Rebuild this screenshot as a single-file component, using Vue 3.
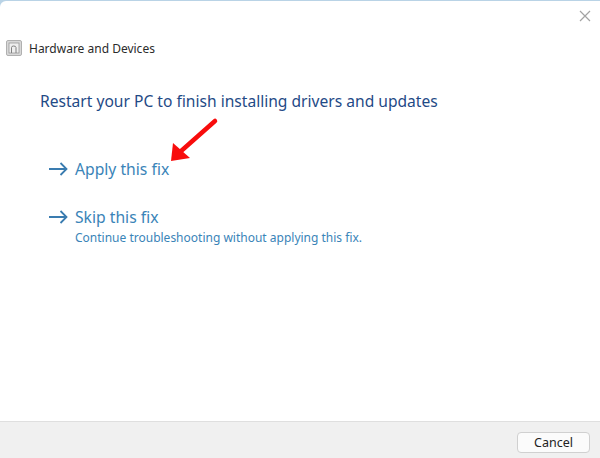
<script setup>
const title = "Restart your PC to finish installing drivers and updates"
</script>

<template>
  <div class="frame">
    <div class="window">
      <button class="close" aria-label="Close">
        <svg width="12" height="12" viewBox="0 0 12 12">
          <path d="M1 1L11 11M11 1L1 11" stroke="#a3a3a3" stroke-width="1.2" fill="none" />
        </svg>
      </button>
      <div class="content">
        <div class="head">
          <svg class="app-icon" width="16" height="16" viewBox="0 0 16 16">
            <rect x="0.5" y="0.5" width="15" height="15" rx="1.5" fill="#d8d8d8" stroke="#b0b0b0" />
            <rect x="3" y="3" width="10" height="10" fill="#efefef" stroke="#8f8f8f" stroke-width="0.7" />
            <path d="M5.5 13V7.5Q5.5 6 7.7 6T10 7.5V13" stroke="#808080" stroke-width="1" fill="none" />
          </svg>
          <span>Hardware and Devices</span>
        </div>
        <h1>{{ title }}</h1>
        <div class="option first">
          <svg class="arrow" width="20" height="16" viewBox="0 0 20 16">
            <path d="M1 8H18.5M12.5 2L18.5 8L12.5 14" stroke="#3a7cb0" stroke-width="1.8" fill="none" />
          </svg>
          <div>
            <div class="opt-title">Apply this fix</div>
          </div>
        </div>
        <div class="option second">
          <svg class="arrow" width="20" height="16" viewBox="0 0 20 16">
            <path d="M1 8H18.5M12.5 2L18.5 8L12.5 14" stroke="#3a7cb0" stroke-width="1.8" fill="none" />
          </svg>
          <div>
            <div class="opt-title">Skip this fix</div>
            <div class="opt-sub">Continue troubleshooting without applying this fix.</div>
          </div>
        </div>
      </div>
      <div class="footer">
        <button class="cancel">Cancel</button>
      </div>
      <!-- red annotation arrow drawn over the dialog -->
      <svg class="pointer" width="60" height="50" viewBox="0 0 60 50">
        <path d="M45 5L10 36" stroke="#f80c0c" stroke-width="4.5" stroke-linecap="round" fill="none" />
        <path d="M1 45L3 27L20 42Z" fill="#f80c0c" />
      </svg>
    </div>
  </div>
</template>

<style scoped>
.frame {
  width: 600px;
  height: 458px;
  background: #b9d3e6;
  padding-top: 1px;
  box-sizing: border-box;
}
.window {
  position: relative;
  height: 457px;
  background: #fff;
  border-radius: 6px 0 0 0;
  display: flex;
  flex-direction: column;
  font-family: "Noto Sans", "Open Sans", sans-serif;
  overflow: hidden;
}
.close {
  position: absolute;
  top: 9px;
  right: 9px;
  border: none;
  background: none;
  padding: 0;
  width: 12px;
  height: 12px;
  display: flex;
}
.content {
  flex: 1;
  padding-top: 39px;
}
.head {
  display: flex;
  align-items: center;
  gap: 7px;
  padding-left: 6px;
  height: 16px;
  font-size: 12px;
  color: #2b2b2b;
}
h1 {
  margin: 34px 0 0 40px;
  font-size: 15.6px;
  line-height: 22px;
  font-weight: 400;
  color: #1f4a86;
}
.option {
  display: flex;
  align-items: flex-start;
  margin-left: 48px;
  gap: 7px;
  color: #3a84b8;
}
.option .arrow {
  margin-top: 4px;
}
.first {
  margin-top: 45px;
}
.second {
  margin-top: 24px;
}
.opt-title {
  font-size: 15.7px;
  line-height: 24px;
}
.opt-sub {
  margin-top: 1px;
  font-size: 12px;
  line-height: 16px;
}
.footer {
  height: 37px;
  box-sizing: border-box;
  background: #f0f0f0;
  border-top: 1px solid #dfdfdf;
  display: flex;
  justify-content: flex-end;
  align-items: flex-start;
  padding: 10px 10px 0 0;
}
.cancel {
  width: 73px;
  height: 21px;
  background: #fbfbfb;
  border: 1px solid #d0d0d0;
  border-radius: 4px;
  font-family: inherit;
  font-size: 12.5px;
  color: #222;
  padding: 0;
}
.pointer {
  position: absolute;
  left: 170px;
  top: 115px;
}
</style>
